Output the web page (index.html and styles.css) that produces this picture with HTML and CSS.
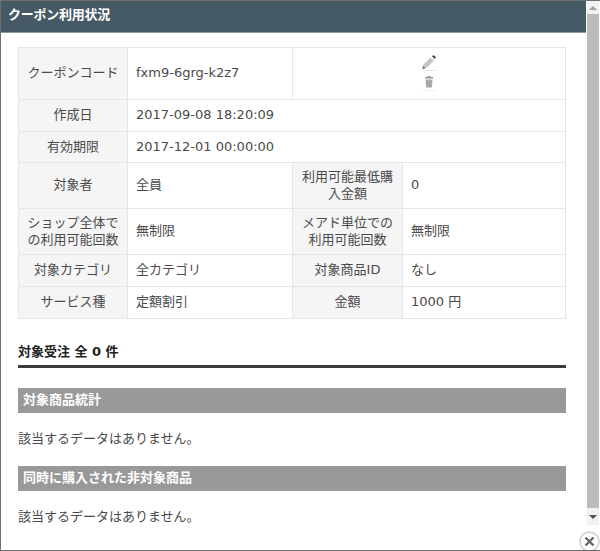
FILE: index.html
```html
<!DOCTYPE html>
<html lang="ja">
<head>
<meta charset="utf-8">
<title>クーポン利用状況</title>
<link rel="stylesheet" href="styles.css">
</head>
<body>
<div class="frame">
  <div class="pane">
    <h1 class="title">クーポン利用状況</h1>
    <div class="content">
      <table class="info">
        <colgroup><col class="c1"><col class="c2"><col class="c3"><col class="c4"></colgroup>
        <tr class="r52">
          <th>クーポンコード</th><td>fxm9-6grg-k2z7</td>
          <td colspan="2" class="actions">
            <svg class="icon" width="18" height="18" viewBox="0 0 18 18"><path d="M10.500 3.500l3.500 3-7 7-4.500 1.300 1-4.300z" fill="#c4c4c4"/><path d="M12 2.500l1.500-1.500 2.500 2.300-1.300 1.700z" fill="#444"/><path d="M3 12l2.400 2.200-3 .8z" fill="#666"/><rect x="2" y="16" width="14" height="1" fill="#e6e6e6"/></svg>
            <svg class="icon" width="18" height="18" viewBox="0 0 18 18"><path d="M5 3h2.500V2h3v1H13v1.500H5z" fill="#999"/><path d="M5.500 5.500h7l-.6 8H6.100z" fill="#a8a8a8"/><rect x="2" y="16" width="14" height="1" fill="#f0f0f0"/></svg>
          </td>
        </tr>
        <tr class="r32"><th>作成日</th><td colspan="3">2017-09-08 18:20:09</td></tr>
        <tr class="r31"><th>有効期限</th><td colspan="3">2017-12-01 00:00:00</td></tr>
        <tr class="r46"><th>対象者</th><td>全員</td><th>利用可能最低購入金額</th><td>0</td></tr>
        <tr class="r46"><th>ショップ全体での利用可能回数</th><td>無制限</td><th>メアド単位での利用可能回数</th><td>無制限</td></tr>
        <tr class="r32"><th>対象カテゴリ</th><td>全カテゴリ</td><th>対象商品ID</th><td>なし</td></tr>
        <tr class="r32"><th>サービス種</th><td>定額割引</td><th>金額</th><td>1000 円</td></tr>
      </table>
      <h2 class="orders">対象受注 全 0 件</h2>
      <h3 class="band">対象商品統計</h3>
      <p class="empty">該当するデータはありません。</p>
      <h3 class="band">同時に購入された非対象商品</h3>
      <p class="empty">該当するデータはありません。</p>
    </div>
  </div>
  <div class="scrollbar">
    <div class="arrow"><span class="tri up"></span></div>
    <div class="thumb"></div>
    <div class="arrow low"><span class="tri down"></span></div>
  </div>
  <div class="close">
    <svg width="21" height="21" viewBox="0 0 21 21"><circle cx="10.500" cy="10.500" r="9.500" fill="#fff" stroke="#cfcfcf" stroke-width="1.500"/><path d="M6.500 6.500l8 8M14.500 6.500l-8 8" stroke="#666" stroke-width="2.400" fill="none"/></svg>
  </div>
</div>
</body>
</html>
```
FILE: styles.css
```css
* { box-sizing: border-box; }
html, body { margin: 0; height: 100%; }
body {
  font-family: "DejaVu Sans", "Noto Sans CJK JP", sans-serif;
  font-size: 13px;
  color: #4a4a4a;
  background: #fff;
  overflow: hidden;
}
.frame {
  position: relative;
  display: flex;
  width: 600px;
  height: 551px;
  border: 1px solid #6f6f6f;
  border-right: 0;
  overflow: hidden;
}
.pane { width: 585px; flex: none; }
.title {
  margin: 0;
  height: 32px;
  padding: 0 7px;
  background: #455a64;
  border-bottom: 1px solid #8b99a0;
  color: #fff;
  font-size: 13px;
  font-weight: 700;
  letter-spacing: -0.25px;
  line-height: 28px;
}
.content { padding: 14px 19px 0 17px; }
.info {
  width: 548px;
  table-layout: fixed;
  border-collapse: collapse;
  line-height: 17px;
}
.c1 { width: 109px; }
.c2 { width: 165px; }
.c3 { width: 110px; }
.c4 { width: 163px; }
.info th, .info td { border: 1px solid #e6e6e6; padding: 0 8px 2px; }
.info th { background: #f5f5f5; font-weight: 400; text-align: center; }
.r52 { height: 52px; }
.r32 { height: 32px; }
.r31 { height: 31px; }
.r46 { height: 46px; }
.info .actions { text-align: center; padding: 5px 0 0; vertical-align: top; }
.icon { display: block; margin: 1px auto 2px; }
.orders {
  margin: 23px 0 0;
  width: 548px;
  height: 26px;
  border-bottom: 3px solid #3c3c3c;
  color: #222;
  font-size: 13px;
  font-weight: 700;
  line-height: 20px;
}
.band {
  margin: 20px 0 0;
  width: 548px;
  height: 25px;
  padding: 0 5px;
  background: #999;
  color: #fff;
  font-size: 13px;
  font-weight: 700;
  line-height: 23px;
}
.empty { margin: 0; padding-top: 17px; height: 53px; line-height: 18px; }
.empty + .band { margin-top: 0; }
.scrollbar {
  flex: none;
  width: 12px;
  height: 524px;
  margin-left: 1px;
  display: flex;
  flex-direction: column;
  background: #f1f1f1;
}
.arrow { height: 13px; display: flex; align-items: center; justify-content: center; }
.arrow.low { height: 17px; }
.thumb { flex: 1; background: #bcbcbc; }
.tri { width: 0; height: 0; border-left: 4px solid transparent; border-right: 4px solid transparent; }
.up { border-bottom: 4px solid #a0a0a0; }
.down { border-top: 4px solid #505050; }
.close { position: absolute; right: 0; bottom: -2px; width: 21px; height: 21px; }
.close svg { display: block; }
```
